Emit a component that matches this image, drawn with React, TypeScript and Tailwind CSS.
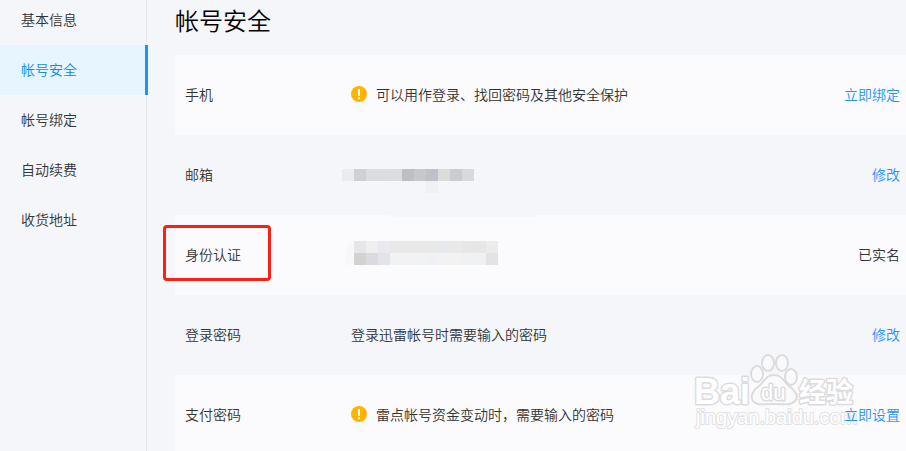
import type { ReactNode } from "react";

type NavItem = { label: string; active?: boolean };

const navItems: NavItem[] = [
  { label: "基本信息" },
  { label: "帐号安全", active: true },
  { label: "帐号绑定" },
  { label: "自动续费" },
  { label: "收货地址" },
];

const CELL = 12;

function WarnIcon() {
  return (
    <svg className="mr-[9px] size-4 shrink-0" viewBox="0 0 16 16" aria-hidden="true">
      <circle cx="8" cy="8" r="8" fill="#ffb400" />
      <rect x="7" y="3" width="2" height="7" fill="#fff" />
      <rect x="7" y="11" width="2" height="2" fill="#fff" />
    </svg>
  );
}

function Cells({ colors, x, y }: { colors: string[]; x: number; y: number }) {
  return (
    <>
      {colors.map((color, i) => (
        <rect key={i} x={x + i * CELL} y={y} width={CELL} height={CELL} fill={color} />
      ))}
    </>
  );
}

function EmailMosaic() {
  return (
    <svg
      className="absolute top-[34px] left-[167px] h-6 w-[132px]"
      viewBox="0 0 132 24"
      shapeRendering="crispEdges"
      aria-hidden="true"
    >
      <Cells
        x={0}
        y={0}
        colors={["#ebebed", "#cfd0d6", "#dbdcde", "#dcdbdf", "#dcddde", "#bebfc0", "#c7c8cc", "#bec2c8", "#dddadb", "#c9cdd1", "#d8d9dd"]}
      />
      <Cells x={84} y={12} colors={["#eff0f4"]} />
    </svg>
  );
}

function IdentityMosaic() {
  return (
    <svg className="absolute top-0 left-[170px] h-[50px] w-[192px]" viewBox="0 0 192 50" aria-hidden="true">
      <path d="M40 0H192L190 2H62Q50 2 40 0Z" fill="#f5f5fa" />
      <path d="M9 26Q0 31 0 42Q0 47 3 50H9Z" fill="#f7f7f8" />
      <g shapeRendering="crispEdges">
        <Cells
          x={9}
          y={26}
          colors={["#e5e6ea", "#efefef", "#e9eaef", "#e8e8e9", "#e8e8e8", "#e8e8e9", "#e9e9e8", "#e7e8ec", "#e9e9e8", "#e7e7e8", "#e6e6e7", "#ebebec"]}
        />
        <Cells
          x={9}
          y={38}
          colors={["#d3d2cf", "#dadadf", "#e3e4e9", "#f1f2f4", "#f2f2f4", "#f1f2f4", "#f0f1f5", "#f2f2f2", "#f2f2f3", "#f0f1f3", "#f0f1f3", "#e3e3e5"]}
        />
      </g>
    </svg>
  );
}

function Row({ label, shaded, children, action }: { label: string; shaded?: boolean; children?: ReactNode; action: ReactNode }) {
  return (
    <li className={`relative flex h-20 items-center pr-1.5 pb-0.5 pl-2.5 ${shaded ? "bg-[#fbfbfd]" : ""}`}>
      <span className="w-[166px] shrink-0">{label}</span>
      <div className="flex flex-1 items-center">{children}</div>
      {action}
    </li>
  );
}

function Action({ children }: { children: string }) {
  return (
    <a href="#" className="relative z-10 shrink-0 text-[#1a94ff]">
      {children}
    </a>
  );
}

function Watermark() {
  return (
    <svg
      className="pointer-events-none absolute right-12 bottom-4 h-[84px] w-[168px]"
      viewBox="0 0 168 84"
      role="img"
      aria-label="Baidu 经验"
    >
      <g
        fill="#fff"
        stroke="#dcdcde"
        strokeWidth="3"
        strokeLinejoin="round"
        paintOrder="stroke"
        fontFamily='"Liberation Sans", "Noto Sans CJK SC", sans-serif'
        fontWeight="700"
      >
        <text x="4" y="53" fontSize="36">Bai</text>
        <g fill="#fafafc" strokeWidth="2" paintOrder="normal">
          <ellipse cx="67" cy="23" rx="6" ry="8" />
          <ellipse cx="78" cy="12" rx="6" ry="8" />
          <ellipse cx="92" cy="12" rx="6" ry="8" />
          <ellipse cx="101" cy="26" rx="6" ry="8" />
          <path d="M84 24C76 24 74 31 69 35C62 40 60 46 63 50C67 55 74 53 84 53C94 53 100 55 105 50C109 46 106 40 99 35C94 31 92 24 84 24Z" />
        </g>
        <text x="71" y="49" fontSize="22" fontWeight="400">du</text>
        <text x="109" y="51" fontSize="27">经验</text>
      </g>
      <text
        x="6"
        y="73"
        fontSize="20"
        fontFamily='"Liberation Sans", sans-serif'
        fontWeight="400"
        fill="#fff"
        stroke="#e2e2e4"
        strokeWidth="2"
        strokeLinejoin="round"
        paintOrder="stroke"
      >
        jingyan.baidu.com
      </text>
    </svg>
  );
}

export default function App() {
  return (
    <div className='relative flex h-screen overflow-hidden bg-[#f4f6fa] font-["Noto_Sans_CJK_SC",sans-serif] text-sm font-[350] text-[#333]'>
      <nav className="w-[147px] shrink-0 border-r border-[#e6e8eb]">
        {navItems.map(({ label, active }) => (
          <a
            key={label}
            href="#"
            aria-current={active ? "page" : undefined}
            className={`flex h-[50px] items-center pb-0.5 pl-[21px] first:mb-[5px] first:h-10 ${
              active ? "-mr-0.5 border-r-3 border-[#1a94ff] bg-[#e7f5ff] text-[#0f88eb]" : ""
            }`}
          >
            {label}
          </a>
        ))}
      </nav>

      <main className="ml-7 min-w-0 flex-1">
        <h1 className="flex h-[55px] items-start pt-1 text-2xl font-[350] text-black">帐号安全</h1>
        <ul>
          <Row label="手机" shaded action={<Action>立即绑定</Action>}>
            <WarnIcon />
            可以用作登录、找回密码及其他安全保护
          </Row>
          <Row label="邮箱" action={<Action>修改</Action>}>
            <EmailMosaic />
          </Row>
          <Row label="身份认证" shaded action={<span className="shrink-0">已实名</span>}>
            <IdentityMosaic />
            <span className="absolute top-2.5 -left-3 h-14 w-[108px] rounded border-3 border-[#ff1e14]" />
          </Row>
          <Row label="登录密码" action={<Action>修改</Action>}>
            登录迅雷帐号时需要输入的密码
          </Row>
          <Row label="支付密码" shaded action={<Action>立即设置</Action>}>
            <WarnIcon />
            雷点帐号资金变动时，需要输入的密码
          </Row>
        </ul>
      </main>

      <Watermark />
    </div>
  );
}
